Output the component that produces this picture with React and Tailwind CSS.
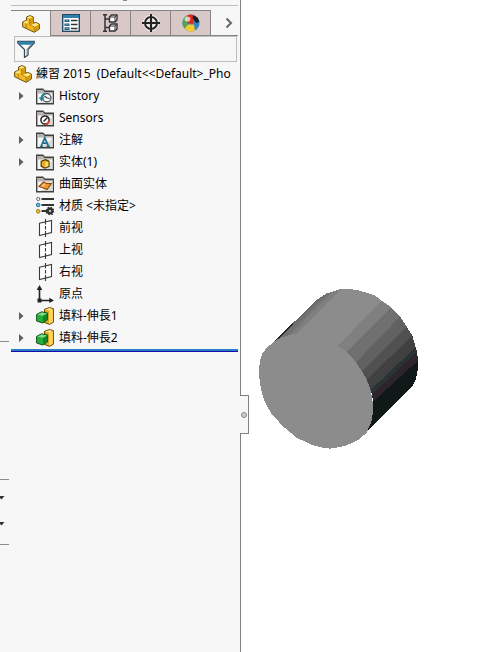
import { useState } from 'react';

const folder = (
  <>
    <path d="M.7 16.8V2.2H6.8L8.8 4.2H17.3V16.8Z" fill="#f6f6f4" stroke="#404040" strokeWidth="1.4" />
    <path d="M1.4 2.9H6.5L8.5 4.9H16.6V6.4H1.4Z" fill="#b9b0b0" />
    <path d="M5 16.1L16.6 8V16.1Z" fill="#d9dad5" />
  </>
);

const icons = {
  history: (
    <>
      {folder}
      <circle cx="10.8" cy="10.8" r="4.1" fill="#fff" stroke="#3d4f58" strokeWidth="1.2" />
      <path d="M8.5 9L10.8 10.8L13.5 11.5" fill="none" stroke="#333" strokeWidth="1.1" />
      <path d="M2.6 10.5H8.6L5.6 14.6Z" fill="#22869b" />
      <path d="M5.4 11C5.4 8 7.8 6.6 10 6.6" fill="none" stroke="#22869b" strokeWidth="1.8" />
    </>
  ),
  sensors: (
    <>
      {folder}
      <circle cx="9" cy="11" r="4.1" fill="#fff" stroke="#222" strokeWidth="1.5" />
      <path d="M7.5 12.5L11.5 8.5" stroke="#222" strokeWidth="1.5" />
      <path d="M9 15.5L13.8 10.5V13L11.5 16Z" fill="#e3382a" />
    </>
  ),
  notes: (
    <>
      {folder}
      <path d="M5.2 15L8.8 6.8L12.4 15M6.8 12.2H11" fill="none" stroke="#24718f" strokeWidth="1.8" />
      <path d="M3.8 15.3H7M10.5 15.3H14" stroke="#24718f" strokeWidth="1.2" />
    </>
  ),
  solids: (
    <>
      {folder}
      <path d="M5.2 8.2L9.5 6.6L13 8.2V13.4L9 15.2L5.2 13.4Z" fill="#e9ae22" stroke="#4a380b" strokeWidth="1.2" />
      <path d="M9.2 9.8V14.2L12.3 12.9V8.6Z" fill="#f8dc68" />
    </>
  ),
  surfaces: (
    <>
      {folder}
      <path d="M3 11.5L7.5 7L10.5 8.4L15.4 8.6L11 14.6L7.5 13Z" fill="#f19a35" stroke="#8f4909" strokeWidth="1.1" />
      <path d="M5 11L8 8.4L9.5 9.4L6.8 12Z" fill="#fbc47a" />
    </>
  ),
  material: (
    <>
      <path d="M5.5 2H18M5.5 8H18M5.5 14H11" stroke="#333" strokeWidth="2" />
      <circle cx="2.2" cy="2" r="1.6" fill="#fff" stroke="#666" />
      <circle cx="2.2" cy="8" r="1.8" fill="#62b9e9" stroke="#28759c" />
      <circle cx="2.2" cy="14.3" r="1.8" fill="#f6ca2d" stroke="#94730d" />
      <circle cx="14" cy="14" r="2.2" fill="none" stroke="#333" strokeWidth="2.4" />
      <circle cx="14" cy="14" r="3.6" fill="none" stroke="#333" strokeWidth="1.6" strokeDasharray="1.5 1.33" />
    </>
  ),
  plane: (
    <>
      <path d="M3.5 4.2L15.5 1.5V13.6L3.5 16.5Z" fill="#fff" stroke="#3a3a3a" strokeWidth="1.1" />
      <path d="M9.5 0V5.5M9.5 7V10.5M9.5 12V18" stroke="#3a3a3a" strokeWidth="1.1" />
    </>
  ),
  origin: (
    <>
      <path d="M3.5 3V15.5H15" fill="none" stroke="#222" strokeWidth="1.6" />
      <path d="M3.5 0L6.3 5H.7ZM18 15.5L13.3 12.7V18Z" fill="#222" />
      <rect x="1.5" y="13.5" width="4" height="4" fill="#222" />
    </>
  ),
  extrude: (
    <>
      <path d="M8.5 2.3L13.5 .6L17.4 1.6V15.2L13.5 17.4L8.5 15.5Z" fill="#e8a91d" stroke="#6b4b0b" />
      <path d="M9.3 2.6L13.5 1.2L16.7 2L13 3.4Z" fill="#ffec9a" />
      <path d="M13 3.6L16.8 2.2V14.8L13 16.7Z" fill="#f9d65c" />
      <path d="M.6 7.4L5.5 4.8L11.6 6V12.8L6.8 16L.6 14Z" fill="#27ad3c" stroke="#12531a" strokeLinejoin="round" />
      <path d="M1.4 7.5L5.7 5.4L10.9 6.4L6.6 8.8Z" fill="#7fdd86" />
      <path d="M7 9.2L11.1 6.9V12.6L7 15.3Z" fill="#178227" />
    </>
  ),
};

const features = [
  { label: 'History', icon: 'history', expandable: true },
  { label: 'Sensors', icon: 'sensors' },
  { label: '注解', icon: 'notes', expandable: true },
  { label: '实体(1)', icon: 'solids', expandable: true },
  { label: '曲面实体', icon: 'surfaces' },
  { label: '材质 <未指定>', icon: 'material' },
  { label: '前视', icon: 'plane' },
  { label: '上视', icon: 'plane' },
  { label: '右视', icon: 'plane' },
  { label: '原点', icon: 'origin' },
  { label: '填料-伸長1', icon: 'extrude', expandable: true },
  { label: '填料-伸長2', icon: 'extrude', expandable: true },
];

function PartIcon() {
  return (
    <svg viewBox="0 0 18 18" className="size-[18px] shrink-0" aria-hidden="true">
      <path d="M.6 7L4.5 5.2V2L8 .6L11.3 2V8.2L13.8 7.4L17.4 9.2V14L12.2 17.3L.6 11.8Z" fill="#f2b81f" stroke="#6e520a" strokeLinejoin="round" />
      <path d="M1.3 7.2L4.5 5.8L7 7L4 8.5ZM5 2.2L8 1.2L10.6 2.2L7.6 3.5ZM9 10.2L13.8 8L16.8 9.4L12.2 11.8Z" fill="#ffe88a" />
      <path d="M7.8 3.9L10.8 2.7V8.6L7.8 9.8ZM12.4 12.3L16.9 9.9V13.7L12.4 16.6Z" fill="#d79a12" />
      <path d="M4.2 8.6V13M7.6 3.6V9.6L12.2 12V16.8" fill="none" stroke="#9a7110" strokeWidth=".7" />
    </svg>
  );
}

function PropertyIcon() {
  return (
    <svg viewBox="0 0 18 18" className="size-[18px]" aria-hidden="true">
      <rect x=".7" y=".7" width="16.6" height="16.6" fill="#fff" stroke="#23495e" strokeWidth="1.4" />
      <rect x="1" y="1" width="16" height="3" fill="#2f80ac" />
      <path d="M2.5 6.8H7.5M2.5 10.8H7.5M2.5 14.6H7.5" stroke="#1f5574" strokeWidth="2.6" />
      <path d="M3.5 6.8H6.5M3.5 10.8H6.5M3.5 14.6H6.5" stroke="#58aed6" />
      <path d="M9 6.5H15.5M9 10.5H15.5M9 14.5H15.5" stroke="#333" strokeWidth="1.5" />
    </svg>
  );
}

function ConfigIcon() {
  return (
    <svg viewBox="0 0 18 18" className="size-[18px]" aria-hidden="true">
      <path d="M3 .7V17.3M3 5H8M3 13.5H8M1 .7H5M1 17.3H5" fill="none" stroke="#333" strokeWidth="1.5" />
      <path d="M7.5 3L9.5 1H15V6L13 8H7.5ZM7.5 12L9.5 10H15V15L13 17H7.5Z" fill="#fff" stroke="#333" strokeWidth="1.4" />
      <path d="M7.5 3H13V8M13 3L15 1M7.5 12H13V17M13 12L15 10" fill="none" stroke="#333" />
    </svg>
  );
}

function TargetIcon() {
  return (
    <svg viewBox="0 0 18 18" className="size-[18px]" aria-hidden="true">
      <circle cx="9" cy="9" r="6" fill="#e8dddd" stroke="#f7f1f1" strokeWidth="4" />
      <circle cx="9" cy="9" r="6" fill="none" stroke="#222" strokeWidth="2" />
      <path d="M9 0V18M0 9H18" stroke="#222" strokeWidth="2" />
    </svg>
  );
}

function AppearanceIcon() {
  return (
    <svg viewBox="0 0 18 18" className="size-[18px]" aria-hidden="true">
      <circle cx="9" cy="9" r="8.6" fill="#2f86c8" />
      <path d="M5 1.4A8.6 8.6 0 0 1 12 1L11 10L5 9Z" fill="#e02a1c" />
      <path d="M3 13.5L6 10.5L12 10.5L13 16.5A8.6 8.6 0 0 1 3 15Z" fill="#f6c92e" />
      <path d="M5 1.5A8.6 8.6 0 0 0 2.5 14.5L6 10.5L4.8 5Z" fill="#55a34d" />
      <path d="M11.2 1.3L15.5 3.5L17.3 8L14 9L10.5 4Z" fill="#1c1c1c" />
      <ellipse cx="5.5" cy="5" rx="2.8" ry="2.6" fill="#fff" opacity=".7" />
    </svg>
  );
}

const tabs = [
  { name: 'Feature tree', Icon: PartIcon },
  { name: 'Properties', Icon: PropertyIcon },
  { name: 'Configurations', Icon: ConfigIcon },
  { name: 'Dimensions', Icon: TargetIcon },
  { name: 'Appearances', Icon: AppearanceIcon },
];

function ToolGutter() {
  return (
    <div className="w-[9px] shrink-0">
      <div className="h-[342px] border-b border-[#8c8c8c]" />
      <div className="mt-[137px] flex h-[66px] flex-col items-start gap-[22px] border-y border-[#8c8c8c] pt-4">
        <button aria-label="More tools" className="block">
          <svg viewBox="0 0 5 4" className="h-1 w-[5px]"><path d="M0 0H4.5L1.5 3.5L0 2Z" fill="#333" /></svg>
        </button>
        <button aria-label="More views" className="block">
          <svg viewBox="0 0 5 4" className="h-1 w-[5px]"><path d="M0 0H4.5L1.5 3.5L0 2Z" fill="#333" /></svg>
        </button>
      </div>
    </div>
  );
}

function Cylinder() {
  return (
    <svg viewBox="0 0 540 540" className="size-[180px]" shapeRendering="crispEdges" role="img" aria-label="Cylinder">
      <path d="M65 192L130 128L198 61L228 41L273 27L300 27L325 31L375 46L395 62L262 198L140 161Z" fill="#8c8c8c" />
      <path d="M66 190L130 128L198 61L228 41L140 161Z" fill="#696969" />
      <path d="M64 193L130 125V134L82 182Z" fill="#202525" />
      <path d="M90 174L215 50L235 39L108 170Z" fill="#707070" />
      <path d="M108 170L235 39L250 34L122 164Z" fill="#767676" />
      <path d="M122 164L248 35L273 27L140 161Z" fill="#808080" />
      <path d="M262 198L395 62L424 82L290 215Z" fill="#808080" />
      <path d="M290 215L424 82L450 110L318 247Z" fill="#707070" />
      <path d="M318 247L450 110L470 140L336 275Z" fill="#616161" />
      <path d="M336 275L470 140L487 167L350 298Z" fill="#515151" />
      <path d="M350 298L487 167L497 201L362 330Z" fill="#414141" />
      <path d="M362 330L497 201L501 214L366 344Z" fill="#293333" />
      <path d="M366 344L501 214L504 242L369 365Z" fill="#2d242c" />
      <path d="M369 365L504 242L503 270L497 300L488 318L325 480L364 425Z" fill="#101918" />
      <path d="M27 287V262L31 240L37 221L50 203L66 190L80 179L98 172L120 165L140 161L166 164L190 168L225 178L262 198L290 215L318 247L336 275L350 298L362 330L368 365L370 390L364 425L350 458L325 480L285 498L240 506L212 502L186 495L140 473L100 440L65 402L44 366L33 328Z" fill="#8c8c8c" />
    </svg>
  );
}

export default function App() {
  const [active, setActive] = useState(0);
  const [filter, setFilter] = useState('');

  return (
    <div className="flex min-h-screen bg-white font-['Noto_Sans','Noto_Sans_CJK_SC',sans-serif] text-xs text-black">
      <aside className="relative flex w-[241px] shrink-0 border-r border-[#808080] bg-[#f7f7f7]">
        <ToolGutter />
        <div className="mx-0.5 min-w-0 flex-1">
          <div className="flex h-1.5 items-start justify-center border-b border-[#bdbdbd]">
            <span className="h-px w-1 bg-[#888]" />
          </div>

          {/* Manager tabs */}
          <div className="mt-1 flex h-[26px]">
            {tabs.map(({ name, Icon }, i) => (
              <button
                key={name}
                aria-label={name}
                onClick={() => setActive(i)}
                className={`flex w-10 items-center justify-center border-t border-r border-[#858585] ${
                  active === i ? 'bg-[#f7f7f7]' : 'border-b bg-[#d8c8c8]'
                }`}
              >
                <Icon />
              </button>
            ))}
            <button aria-label="More tabs" className="flex flex-1 items-center justify-center border-b border-[#858585] pl-2">
              <svg viewBox="0 0 8 12" className="h-3 w-2"><path d="M1.5 1.5L6 6L1.5 10.5" fill="none" stroke="#666" strokeWidth="2" /></svg>
            </button>
          </div>

          {/* Filter */}
          <label className="mr-px ml-[3px] flex h-[26px] items-center border border-[#bdbdbd] pl-0.5">
            <svg viewBox="0 0 18 18" className="size-[18px] shrink-0" aria-hidden="true">
              <path d="M.8 1.5H17.2V3L11 9.5V15L7.5 17.5V9.5L.8 3Z" fill="#fff" stroke="#3b4b55" strokeWidth="1.3" />
              <path d="M1.4 1.5H16.6V3L15 4.8H3L1.4 3Z" fill="#2e83ad" />
              <path d="M9.5 9L13 5H14.5L10.5 9.3V14.8L9.5 15.6Z" fill="#8e989d" />
            </svg>
            <input
              aria-label="Filter"
              value={filter}
              onChange={(e) => setFilter(e.target.value)}
              className="min-w-0 flex-1 bg-transparent px-1 outline-none"
            />
          </label>

          {/* Feature tree */}
          <div className="flex h-[23px] items-center gap-1 pl-[3px] whitespace-pre">
            <PartIcon />
            <span>練習 2015  (Default&lt;&lt;Default&gt;_Pho</span>
          </div>
          <ul className="border-b border-[#1a08a8]">
            {features.map(({ label, icon, expandable }) => (
              <li key={label} className="flex h-[22px] items-center">
                <span className="flex w-[25px] pl-2">
                  {expandable && (
                    <button aria-label={`Expand ${label}`}>
                      <svg viewBox="0 0 5 8" className="h-2 w-[5px]"><path d="M0 0L4.5 4L0 8Z" fill="#606060" /></svg>
                    </button>
                  )}
                </span>
                <svg viewBox="0 0 18 18" className="size-[18px] shrink-0" aria-hidden="true">{icons[icon]}</svg>
                <span className="pl-[5px] whitespace-nowrap">{label}</span>
              </li>
            ))}
            <li className="h-0.5 bg-[#2580c8]" />
          </ul>
        </div>

        <button
          aria-label="Collapse panel"
          className="absolute top-[395px] left-[240px] flex h-[39px] w-[9px] items-center justify-center border border-l-0 border-[#808080] bg-[#f7f7f7]"
        >
          <span className="size-1.5 rounded-full border border-[#888] bg-[#ccc]" />
        </button>
      </aside>

      <main className="min-w-0 flex-1 overflow-hidden pt-[280px] pl-[9px]">
        <Cylinder />
      </main>
    </div>
  );
}
